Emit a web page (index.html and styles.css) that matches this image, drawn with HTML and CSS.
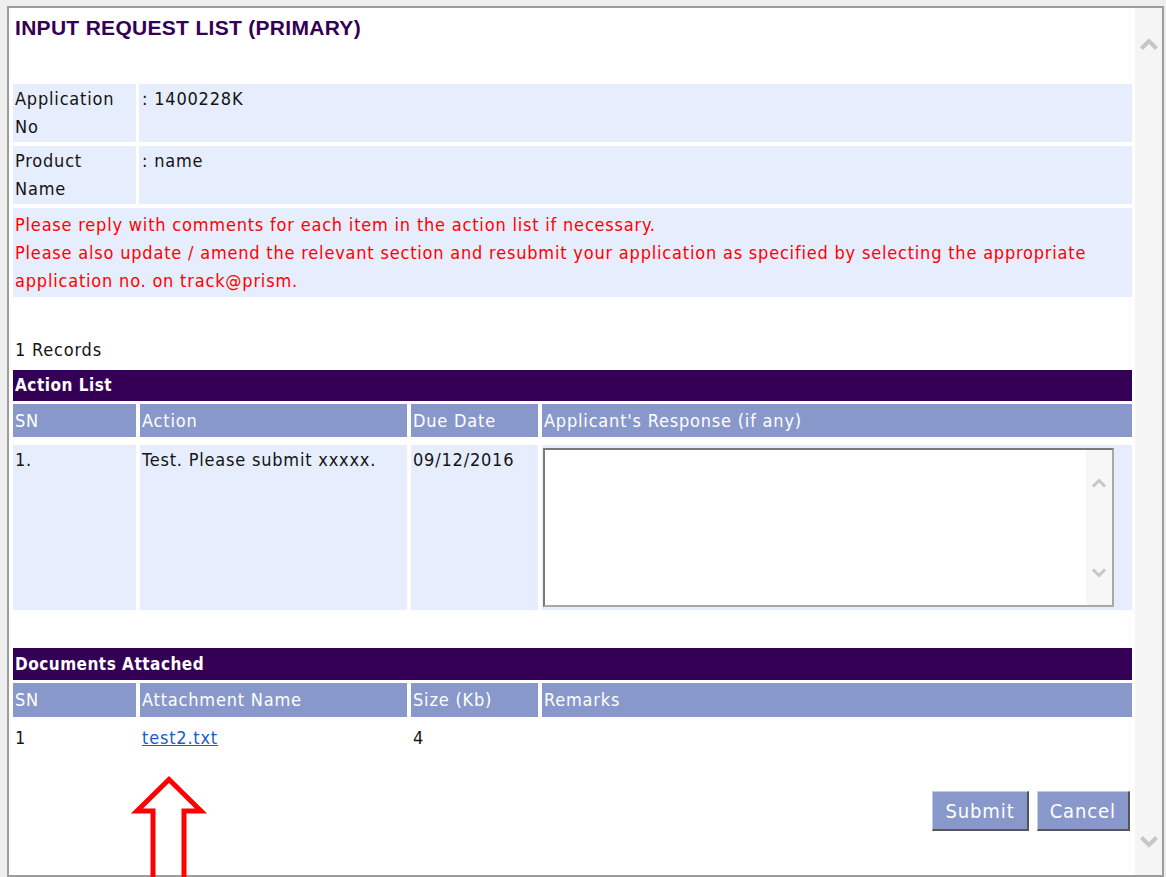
FILE: index.html
```html
<!DOCTYPE html>
<html lang="en">
<head>
<meta charset="utf-8">
<title>Input Request List (Primary)</title>
<link rel="stylesheet" href="styles.css">
</head>
<body>
<div class="desk">
  <div class="window">
    <main class="content">
      <h1 class="title">INPUT REQUEST LIST (PRIMARY)</h1>

      <section class="info">
        <div class="cell label">Application<br>No</div>
        <div class="cell value">: 1400228K</div>
        <div class="cell label">Product<br>Name</div>
        <div class="cell value">: name</div>
        <div class="cell notice">Please reply with comments for each item in the action list if necessary.<br>Please also update / amend the relevant section and resubmit your application as specified by selecting the appropriate application no. on track@prism.</div>
      </section>

      <p class="count">1 Records</p>

      <section class="grid actions">
        <div class="bar">Action List</div>
        <div class="th">SN</div>
        <div class="th">Action</div>
        <div class="th">Due Date</div>
        <div class="th">Applicant's Response (if any)</div>
        <div class="td shaded">1.</div>
        <div class="td shaded">Test. Please submit xxxxx.</div>
        <div class="td shaded">09/12/2016</div>
        <div class="td shaded response">
          <div class="textbox">
            <textarea name="response" aria-label="Applicant's Response"></textarea>
            <div class="tscroll">
              <svg width="16" height="10" viewBox="0 0 16 10"><polyline points="2,8.5 8,2.5 14,8.5"/></svg>
              <svg width="16" height="10" viewBox="0 0 16 10"><polyline points="2,1.5 8,7.5 14,1.5"/></svg>
            </div>
          </div>
        </div>
      </section>

      <section class="grid docs">
        <div class="bar">Documents Attached</div>
        <div class="th">SN</div>
        <div class="th">Attachment Name</div>
        <div class="th">Size (Kb)</div>
        <div class="th">Remarks</div>
        <div class="td">1</div>
        <div class="td"><a href="#" class="file">test2.txt</a></div>
        <div class="td">4</div>
        <div class="td"></div>
      </section>

      <div class="buttons">
        <button type="button" class="btn">Submit</button>
        <button type="button" class="btn">Cancel</button>
      </div>
    </main>

    <aside class="scrollbar">
      <svg width="20" height="14" viewBox="0 0 20 14"><polyline points="2.5,11.5 10,4 17.5,11.5"/></svg>
      <svg width="20" height="14" viewBox="0 0 20 14"><polyline points="2.5,2.5 10,10 17.5,2.5"/></svg>
    </aside>
  </div>

  <svg class="pointer" width="84" height="110" viewBox="0 0 84 110">
    <path d="M25 112 V39 H9 L41 7.5 L73 39 H56 V112"/>
  </svg>
</div>
</body>
</html>
```

FILE: styles.css
```css
* {
  box-sizing: border-box;
}

html,
body {
  margin: 0;
  height: 100%;
}

body {
  background: #eeeeee;
  font-family: "DejaVu Sans Condensed", "DejaVu Sans", sans-serif;
  font-stretch: condensed;
  font-size: 18px;
  line-height: 28px;
  letter-spacing: 0.8px;
  color: #141414;
  overflow: hidden;
}

/* outer area holding the dialog */
.desk {
  position: relative;
  width: 1166px;
  height: 877px;
  padding: 6px 0 0 7px;
}

.window {
  display: flex;
  width: 1157px;
  height: 871px;
  border: 2px solid #9c9c9c;
  background: #ffffff;
}

.content {
  flex: 1;
  min-width: 0;
  padding: 0 3px 0 4px;
  overflow: hidden;
}

/* heading */
.title {
  margin: 8px 0 0;
  padding-left: 2px;
  font-family: "Liberation Sans", Arial, sans-serif;
  font-stretch: normal;
  font-size: 21px;
  line-height: 24px;
  letter-spacing: 0.3px;
  font-weight: bold;
  color: #330055;
}

/* application details block */
.info {
  display: grid;
  grid-template-columns: 123px 1fr;
  column-gap: 3px;
  row-gap: 4px;
  margin-top: 44px;
}

.cell {
  background: #e6edfc;
  padding: 1px 2px;
}

.value {
  padding-left: 3px;
}

.notice {
  grid-column: 1 / -1;
  padding: 3px 2px 2px;
  color: #ff0000;
}

.count {
  margin: 39px 0 6px 2px;
}

/* list tables */
.grid {
  display: grid;
  grid-template-columns: 123px 267px 127px 1fr;
  column-gap: 4px;
  row-gap: 3px;
}

.bar {
  grid-column: 1 / -1;
  background: #330055;
  color: #ffffff;
  font-weight: bold;
  font-size: 17px;
  letter-spacing: 0.5px;
  line-height: 31px;
  padding-left: 2px;
}

.docs .bar {
  line-height: 32px;
}

.th {
  background: #8898cb;
  color: #ffffff;
  line-height: 33px;
  padding-left: 2px;
}

.docs .th {
  line-height: 34px;
}

.td {
  margin-top: 5px;
  padding: 1px 2px;
}

.docs .td {
  margin-top: 3px;
}

.shaded {
  background: #e6edfc;
}

.td.response {
  padding: 3px 0 3px 1px;
}

.actions {
  margin-bottom: 38px;
}

/* response box with its own scroll track */
.textbox {
  display: flex;
  width: 571px;
  height: 159px;
  border: 2px solid #8c8c8c;
  border-color: #7a7a7a #a8a8a8 #a8a8a8 #7a7a7a;
  background: #ffffff;
}

.textbox textarea {
  flex: 1;
  border: 0;
  margin: 0;
  padding: 2px;
  resize: none;
  outline: none;
  font: inherit;
  background: transparent;
}

.tscroll {
  width: 26px;
  background: #f7f7f7;
  display: flex;
  flex-direction: column;
  justify-content: space-between;
  align-items: center;
  padding: 28px 0 27px;
}

.tscroll polyline,
.scrollbar polyline {
  fill: none;
  stroke: #c6c6c6;
  stroke-width: 3;
}

.file {
  color: #1a5cc8;
  text-decoration: underline;
}

/* form actions */
.buttons {
  display: flex;
  justify-content: flex-end;
  gap: 8px;
  margin: 38px 2px 0 0;
}

.btn {
  height: 40px;
  padding: 0 12px;
  background: #8898cb;
  color: #ffffff;
  font-family: inherit;
  font-stretch: condensed;
  font-size: 20px;
  letter-spacing: 0.9px;
  border-style: solid;
  border-width: 1px 2px 2px 1px;
  border-color: #c3cae6 #555555 #555555 #c3cae6;
}

/* window scroll track */
.scrollbar {
  width: 27px;
  background: #f5f5f5;
  display: flex;
  flex-direction: column;
  justify-content: space-between;
  align-items: center;
  padding: 29px 0 26px;
}

.scrollbar polyline {
  stroke-width: 4;
}

/* annotation arrow drawn over the dialog */
.pointer {
  position: absolute;
  left: 128px;
  top: 772px;
}

.pointer path {
  fill: none;
  stroke: #ff0000;
  stroke-width: 5;
  stroke-linejoin: miter;
}
```
